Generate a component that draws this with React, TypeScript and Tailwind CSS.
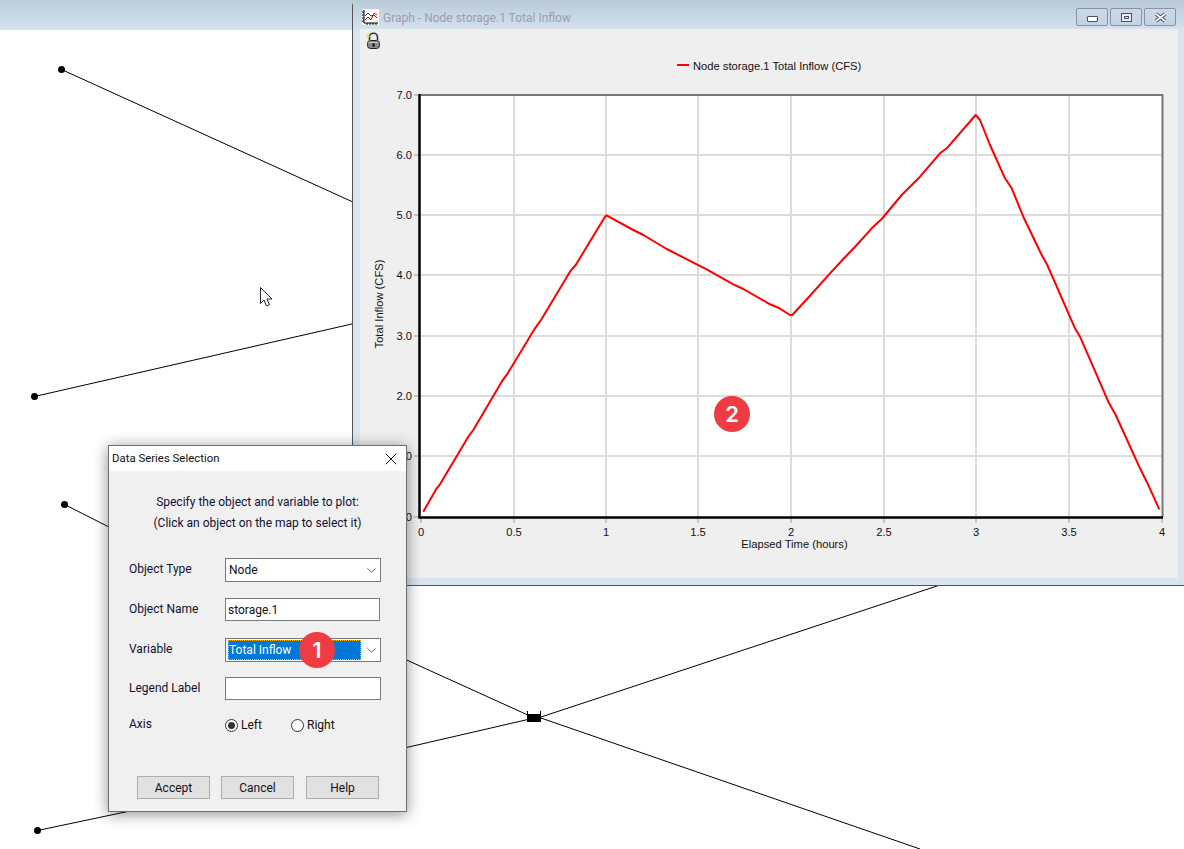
import { ChevronDown, X } from 'lucide-react'

const uiFont = "font-['Roboto','Noto_Sans',sans-serif]"

const yTicks = [
  { label: '7.0', y: 95 },
  { label: '6.0', y: 155 },
  { label: '5.0', y: 215 },
  { label: '4.0', y: 275 },
  { label: '3.0', y: 336 },
  { label: '2.0', y: 396 },
  { label: '1.0', y: 456 },
  { label: '0', y: 517 },
]

const xTicks = [
  { label: '0', x: 421 },
  { label: '0.5', x: 514 },
  { label: '1', x: 606 },
  { label: '1.5', x: 698 },
  { label: '2', x: 791 },
  { label: '2.5', x: 884 },
  { label: '3', x: 976 },
  { label: '3.5', x: 1069 },
  { label: '4', x: 1162 },
]

const inflow =
  '423.300,511.700 436.700,488.300 440,484.300 468.300,436.700 473.300,430 501.700,381.700 507.700,373.300 ' +
  '535,328.300 541,320 570,271.700 575.700,265 605,216.700 606.500,215.300 ' +
  '633.300,230 643.300,235 666.700,249 696.700,264.300 706.700,269.300 733.300,284.300 743.300,289 ' +
  '770,304.300 778.300,307.700 790,315 792.300,315 810,295.700 830,273.300 843.300,259 856.700,245 ' +
  '873.300,226.700 881.700,219 901.700,195 920,176.700 940,153.300 946.700,148.300 975.700,115 980,120 ' +
  '990,145 1005,178.300 1011.700,188.300 1023.300,216.700 1041.700,255 1047.300,265 1075,328.300 1080,336.700 ' +
  '1108.300,401.700 1115.700,415 1140,468.300 1146.700,481.700 1159.300,509.300'

function Background() {
  return (
    <svg className="absolute inset-0" width="1184" height="849" viewBox="0 0 1184 849">
      <g stroke="#000" strokeWidth="1" fill="none">
        <line x1="61.500" y1="69.500" x2="354" y2="202.500" />
        <line x1="34.500" y1="396.500" x2="354" y2="323.500" />
        <line x1="64.500" y1="504.500" x2="110" y2="527.500" />
        <line x1="400" y1="657" x2="530" y2="716" />
        <line x1="400" y1="749" x2="530" y2="719" />
        <line x1="538" y1="718" x2="940" y2="585" />
        <line x1="538" y1="717" x2="920" y2="849" />
        <line x1="37.500" y1="830.500" x2="130" y2="811" />
      </g>
      <g fill="#000">
        <circle cx="61.500" cy="69.500" r="3.500" />
        <circle cx="34.500" cy="396.500" r="3.500" />
        <circle cx="64.500" cy="504.500" r="3.500" />
        <circle cx="37.500" cy="830.500" r="3.500" />
        <rect x="527" y="714" width="14" height="8" />
        <rect x="527" y="711" width="1" height="3" />
        <rect x="540" y="711" width="1" height="3" />
      </g>
      <path d="M260.500 287.500v16l3.500-3.500 2.500 6 3-1.300-2.500-5.700h5z" fill="#fff" stroke="#223" strokeWidth="1" />
    </svg>
  )
}

function CloseGlyph() {
  return (
    <svg width="13" height="11" viewBox="0 0 13 11" fill="none">
      <path d="M2 2l9 7M11 2l-9 7" stroke="#4a5068" strokeWidth="3.500" />
      <path d="M2 2l9 7M11 2l-9 7" stroke="#fff" strokeWidth="1.600" />
    </svg>
  )
}

function TitleButton({ kind }: { kind: 'min' | 'max' | 'close' }) {
  return (
    <div className="flex h-[18px] w-[32px] items-center justify-center rounded-[2px] border border-[#8492ab] bg-linear-to-b from-[#cbd8e6] to-[#c4d3e4]">
      {kind === 'min' && <div className="mt-[3px] h-[6px] w-[11px] rounded-[1px] border border-[#4a5068] bg-white" />}
      {kind === 'max' && (
        <div className="flex h-[9px] w-[11px] items-center justify-center border border-[#4a5068] bg-[#e8eef5]">
          <div className="h-[3px] w-[5px] border border-[#4a5068]" />
        </div>
      )}
      {kind === 'close' && <CloseGlyph />}
    </div>
  )
}

function GraphIcon() {
  return (
    <svg width="17" height="16" viewBox="0 0 17 16">
      <rect width="17" height="16" fill="#fff" />
      <path d="M2 1v13h14" stroke="#000" fill="none" />
      <path d="M0 3h2M0 6h2M0 9h2M0 12h2M5 14v2M8 14v2M11 14v2M14 14v2" stroke="#000" />
      <path d="M3 11l3-3 3 3 3-7 3 2" stroke="#e01010" fill="none" />
      <path d="M3 7l3-3 3 3 3-1 3 3" stroke="#2030c0" fill="none" />
    </svg>
  )
}

function LockIcon() {
  return (
    <svg width="16" height="18" viewBox="0 0 16 18">
      <path d="M4.500 8V5a4 3.800 0 0 1 8 0v3" fill="none" stroke="#333" strokeWidth="1.600" />
      <rect x="2.500" y="8.500" width="12" height="8" rx="3" fill="#8a8a8a" stroke="#222" />
      <rect x="3.500" y="10" width="10" height="1" fill="#c4c4c4" />
      <path d="M8.500 11.500v3" stroke="#000" strokeWidth="2" />
      <path d="M0 3l2 .5L3 1l.5 2.500L6 4 3.500 5 3 7 2 5z" fill="#f5e620" />
    </svg>
  )
}

function Chart() {
  return (
    <svg width="818" height="549" viewBox="360 29 818 549" className="block font-['Liberation_Sans',sans-serif] text-[11.200px]">
      <rect x="419" y="95" width="744" height="422" fill="#fff" />
      <g stroke="#dcdcdc" strokeWidth="2">
        {yTicks.slice(1, -1).map((t) => (
          <line key={t.label} x1="420" x2="1162" y1={t.y} y2={t.y} />
        ))}
        {xTicks.slice(1, -1).map((t) => (
          <line key={t.label} x1={t.x} x2={t.x} y1="96" y2="517" />
        ))}
      </g>
      <g stroke="#c4c4c4" strokeWidth="2">
        {yTicks.map((t) => (
          <line key={t.label} x1="414" x2="419" y1={t.y} y2={t.y} />
        ))}
        {xTicks.map((t) => (
          <line key={t.label} x1={t.x} x2={t.x} y1="518" y2="523" />
        ))}
      </g>
      <path d="M419 95H1162.500V517" fill="none" stroke="#777" strokeWidth="2" />
      <path d="M419.500 94V517.500H1163" fill="none" stroke="#000" strokeWidth="2.500" />
      <polyline points={inflow} fill="none" stroke="#ff0000" strokeWidth="2" strokeLinejoin="round" />
      <line x1="677" x2="689" y1="65" y2="65" stroke="#ff0000" strokeWidth="2" />
      <text x="693" y="70" fill="#111">
        Node storage.1 Total Inflow (CFS)
      </text>
      {yTicks.map((t) => (
        <text key={t.label} x="412" y={t.y + 4} textAnchor="end" fill="#111">
          {t.label}
        </text>
      ))}
      {xTicks.map((t) => (
        <text key={t.label} x={t.x} y="536" textAnchor="middle" fill="#111">
          {t.label}
        </text>
      ))}
      <text x="794.500" y="548" textAnchor="middle" fill="#111">
        Elapsed Time (hours)
      </text>
      <text transform="translate(383 304) rotate(-90)" textAnchor="middle" fill="#111">
        Total Inflow (CFS)
      </text>
    </svg>
  )
}

function GraphWindow() {
  return (
    <div className="absolute left-[352px] top-0 flex h-[586px] w-[832px] flex-col rounded-tl-[6px] border-b border-l border-[#555] bg-[#d9e5f1]">
      <div className={`${uiFont} flex h-[29px] shrink-0 items-center bg-linear-to-b from-[#b9cad9] to-[#d4e1ee] pl-[9px] pr-[8px] pt-[5px]`}>
        <GraphIcon />
        <span className="ml-[4px] translate-y-[1px] text-[12px] text-[#9a9eac]">Graph - Node storage.1 Total Inflow</span>
        <div className="ml-auto flex gap-[2px] self-start pt-[3px]">
          <TitleButton kind="min" />
          <TitleButton kind="max" />
          <TitleButton kind="close" />
        </div>
      </div>
      <div className="relative ml-[7px] h-[549px] w-[818px] bg-[#efefef]">
        <div className="absolute left-[5px] top-[3px]">
          <LockIcon />
        </div>
        <Chart />
      </div>
    </div>
  )
}

function Field({ label, className, children }: { label: string; className: string; children: React.ReactNode }) {
  return (
    <div className={`${className} flex items-center`}>
      <span className="w-[96px] -translate-y-[1px] text-[12px] text-[#101030]">{label}</span>
      {children}
    </div>
  )
}

function Combo({ children }: { children: React.ReactNode }) {
  return (
    <div className="flex h-[24px] w-[156px] items-center border border-[#7a7a7a] bg-white">
      <div className="flex h-full grow items-center py-[1px] pl-[2px] pr-[3px] text-[12px] text-[#111]">{children}</div>
      <ChevronDown size={15} strokeWidth={1.300} className="mr-[1px] shrink-0 text-[#444]" />
    </div>
  )
}

function Radio({ label, checked, className }: { label: string; checked?: boolean; className: string }) {
  return (
    <div className={`${className} flex items-center gap-[3px] text-[12px] text-[#111]`}>
      <div className="flex h-[13px] w-[13px] items-center justify-center rounded-full border border-[#333] bg-white">
        {checked && <div className="h-[7px] w-[7px] rounded-full bg-[#333]" />}
      </div>
      {label}
    </div>
  )
}

function DialogButton({ label, className = '' }: { label: string; className?: string }) {
  return (
    <div className={`${className} flex h-[23px] w-[73px] items-center justify-center border border-[#adadad] bg-[#e1e1e1] text-[12px] text-[#111]`}>
      {label}
    </div>
  )
}

function SeriesDialog() {
  return (
    <div className={`${uiFont} absolute left-[108px] top-[445px] flex h-[367px] w-[299px] flex-col border border-[#6e6e6e] bg-[#f0f0f0] shadow-[0_2px_14px_rgba(0,0,0,0.45)]`}>
      <div className="flex h-[25px] shrink-0 items-center justify-between bg-white pl-[3px] pr-[5px] text-[11.400px] text-[#111]">
        Data Series Selection
        <X size={20} strokeWidth={1.200} />
      </div>
      <div className="flex grow flex-col px-[20px]">
        <div className="mt-[21px] text-center text-[12px] leading-[21px] text-[#101030]">
          <p>Specify the object and variable to plot:</p>
          <p>(Click an object on the map to select it)</p>
        </div>
        <Field label="Object Type" className="mt-[24px]">
          <Combo>
            <span className="pl-[1px]">Node</span>
          </Combo>
        </Field>
        <Field label="Object Name" className="mt-[16px]">
          <div className="flex h-[23px] w-[155px] items-center border border-[#7a7a7a] bg-white pl-[2px] text-[12px] text-[#111]">storage.1</div>
        </Field>
        <Field label="Variable" className="mt-[17px]">
          <Combo>
            <div className="flex h-[20px] w-full items-center bg-[#0078d7] pl-[1px] text-white outline-1 -outline-offset-1 outline-dotted outline-[#ffb000]">
              Total Inflow
            </div>
          </Combo>
        </Field>
        <Field label="Legend Label" className="mt-[15px]">
          <div className="h-[23px] w-[156px] border border-[#7a7a7a] bg-white" />
        </Field>
        <div className="mt-[16px] flex items-center">
          <span className="w-[96px] -translate-y-[1px] text-[12px] text-[#101030]">Axis</span>
          <Radio label="Left" checked className="w-[66px]" />
          <Radio label="Right" className="" />
        </div>
        <div className="mt-[42px] flex gap-[11px] pl-[8px]">
          <DialogButton label="Accept" />
          <DialogButton label="Cancel" />
          <DialogButton label="Help" className="ml-[1px]" />
        </div>
      </div>
    </div>
  )
}

function Badge({ n, className }: { n: number; className: string }) {
  return (
    <div className={`${className} absolute flex h-[36px] w-[36px] items-center justify-center rounded-full bg-[#ef3b42] font-['Inter',sans-serif] text-[22px] font-semibold text-white`}>
      {n}
    </div>
  )
}

export default function App() {
  return (
    <div className="relative h-[849px] w-[1184px] overflow-hidden bg-white">
      <div className="h-[30px] bg-linear-to-b from-[#bccddc] to-[#d5e2ef]" />
      <Background />
      <GraphWindow />
      <SeriesDialog />
      <Badge n={1} className="left-[299px] top-[632px]" />
      <Badge n={2} className="left-[714px] top-[396px]" />
    </div>
  )
}
